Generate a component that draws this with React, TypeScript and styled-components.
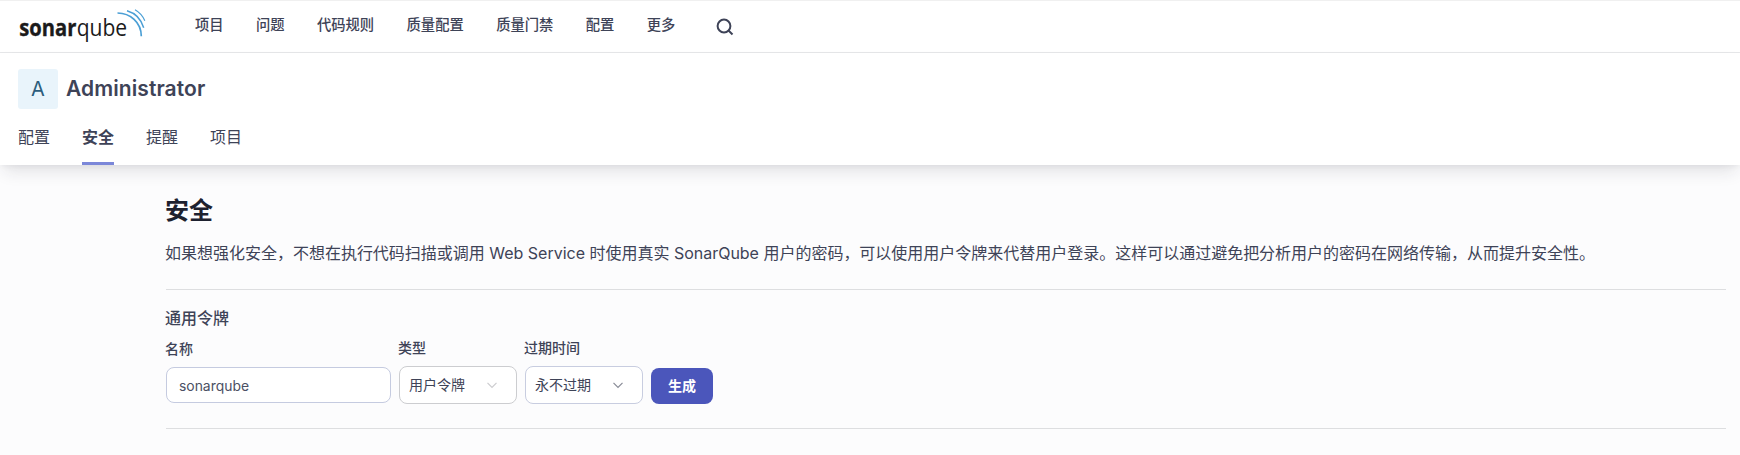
import React from 'react';
import styled, { createGlobalStyle } from 'styled-components';

const GlobalStyle = createGlobalStyle`
  *, *::before, *::after { box-sizing: border-box; }
  body {
    margin: 0;
    background: #fcfcfd;
    color: #3e4357;
    font-family: Inter, "Noto Sans CJK SC", sans-serif;
    font-size: 16px;
    line-height: 24px;
    overflow: hidden;
  }
  h1, h2, p { margin: 0; }
`;

const Page = styled.div`
  height: 455px;
  overflow: hidden;
`;

const TopBar = styled.header`
  display: flex;
  align-items: center;
  height: 53px;
  background: #fff;
  border-top: 1px solid #f0f0f0;
  border-bottom: 1px solid #e6e7e9;
`;

const Logo = styled.svg`
  display: block;
  flex: none;
  width: 150px;
  height: 51px;
`;

const Nav = styled.nav`
  display: flex;
  gap: 32.4px;
  margin-left: 45px;
  padding-bottom: 3px;
`;

const NavLink = styled.a`
  font-size: 14.3px;
  line-height: 20px;
  font-weight: 500;
  white-space: nowrap;
`;

const SearchIcon = styled.svg`
  margin: 1px 0 0 41px;
  width: 18px;
  height: 18px;
`;

const AccountHeader = styled.section`
  position: relative;
  height: 112px;
  padding: 16px 18px 0;
  background: #fff;
  box-shadow: 0 10px 16px -4px rgba(29, 33, 47, 0.12), 0 2px 6px -1px rgba(29, 33, 47, 0.06);
`;

const Identity = styled.div`
  display: flex;
  align-items: center;
  gap: 8px;
  height: 40px;
`;

const Avatar = styled.div`
  width: 40px;
  height: 40px;
  border-radius: 3px;
  background: #e9f4fb;
  color: #2c5d7c;
  font-size: 20px;
  line-height: 40px;
  text-align: center;
`;

const UserName = styled.h2`
  font-size: 21px;
  line-height: 40px;
  font-weight: 600;
  letter-spacing: 0.08px;
`;

const Tabs = styled.nav`
  display: flex;
  gap: 32px;
  height: 56px;
`;

const Tab = styled.a<{ $active?: boolean }>`
  padding-top: 16px;
  font-size: 16px;
  line-height: 24px;
  font-weight: ${({ $active }) => ($active ? 600 : 400)};
  border-bottom: 3px solid ${({ $active }) => ($active ? '#7b87d9' : 'transparent')};
`;

const Main = styled.main`
  padding: 30px 14px 0 165px;
`;

const Title = styled.h1`
  font-size: 24px;
  line-height: 32px;
  font-weight: 700;
  color: #1d212f;
`;

const Description = styled.p`
  margin-top: 14px;
  line-height: 24px;
  font-weight: 400;
  letter-spacing: -0.01px;
  white-space: nowrap;
`;

const Divider = styled.div`
  height: 1px;
  margin: 24px 0 0 1px;
  background: #dddee0;
`;

const SectionTitle = styled.h2`
  margin-top: 16px;
  font-size: 16px;
  line-height: 24px;
  font-weight: 500;
`;

const TokenForm = styled.form`
  display: flex;
  align-items: flex-end;
  gap: 8px;
  height: 74px;
  padding-left: 1px;
`;

const Field = styled.div<{ $width: number; $drop?: number }>`
  display: flex;
  flex-direction: column;
  width: ${({ $width }) => $width}px;
  padding-bottom: ${({ $drop = 0 }) => $drop}px;
`;

const Label = styled.label<{ $gap: number }>`
  margin: 0 0 ${({ $gap }) => $gap}px -1px;
  font-size: 14px;
  line-height: 20px;
  font-weight: 500;
`;

const NameInput = styled.input`
  width: 100%;
  height: 36px;
  padding: 1px 11px 0 12px;
  border: 1px solid #c5cbe0;
  border-radius: 8px;
  background: #fff;
  color: #4b5064;
  font: 400 13.9px/20px Inter, sans-serif;
  outline: none;
`;

const Select = styled.div<{ $muted?: boolean }>`
  display: flex;
  align-items: center;
  justify-content: space-between;
  height: 38px;
  padding: 0 18px 0 9px;
  border: 1px solid ${({ $muted }) => ($muted ? '#cccdd0' : '#c8cde0')};
  border-radius: 8px;
  background: #fff;
  color: #3e4357;
  font-size: 14px;
  line-height: 20px;
  font-weight: 400;

  svg {
    width: 12px;
    height: 12px;
    stroke: ${({ $muted }) => ($muted ? '#cccccf' : '#888b96')};
  }
`;

const GenerateButton = styled.button`
  width: 62px;
  height: 36px;
  padding: 0;
  border: 0;
  border-radius: 8px;
  background: #4b56bb;
  color: #fff;
  font: 700 14px/20px Inter, "Noto Sans CJK SC", sans-serif;
`;

const Chevron = () => (
  <svg viewBox="0 0 12 12" fill="none" strokeWidth="1.2">
    <path d="M1.5 3.8 6 8.3l4.5-4.5" />
  </svg>
);

const links = ['项目', '问题', '代码规则', '质量配置', '质量门禁', '配置', '更多'];
const tabs = ['配置', '安全', '提醒', '项目'];

export default function App() {
  return (
    <>
      <GlobalStyle />
      <Page>
        <TopBar>
          <Logo viewBox="0 1 150 51">
            <g fill="#1b1a1b" fontFamily="Open Sans, Noto Sans, sans-serif" fontSize="23">
              <text transform="translate(19.3 36) scale(0.875 1)" fontWeight="700" stroke="#1b1a1b" strokeWidth="0.4">sonar</text>
              <text transform="translate(76.7 36) scale(0.915 1)" fontWeight="400">qube</text>
            </g>
            <g fill="none" stroke="#4b9fd5">
              <path d="M117.5 13C130 13 141.3 22 141.3 36.3" strokeWidth="1.7" />
              <path d="M127 10.7C135 13 141.3 19.5 143.7 27.8" strokeWidth="1.5" />
              <path d="M135 9.8C139.5 12.3 142.7 16 144.8 20.7" strokeWidth="1.2" />
            </g>
          </Logo>
          <Nav>
            {links.map((label) => (
              <NavLink key={label}>{label}</NavLink>
            ))}
          </Nav>
          <SearchIcon viewBox="0 0 18 18" fill="none" stroke="#3e4357" strokeWidth="2">
            <circle cx="8" cy="8" r="6.4" />
            <path d="m12.5 12.5 4 4" />
          </SearchIcon>
        </TopBar>

        <AccountHeader>
          <Identity>
            <Avatar>A</Avatar>
            <UserName>Administrator</UserName>
          </Identity>
          <Tabs>
            {tabs.map((label) => (
              <Tab key={label} $active={label === '安全'}>{label}</Tab>
            ))}
          </Tabs>
        </AccountHeader>

        <Main>
          <Title>安全</Title>
          <Description>
            如果想强化安全，不想在执行代码扫描或调用 Web Service 时使用真实 SonarQube 用户的密码，可以使用用户令牌来代替用户登录。这样可以通过避免把分析用户的密码在网络传输，从而提升安全性。
          </Description>
          <Divider />
          <SectionTitle>通用令牌</SectionTitle>
          <TokenForm>
            <Field $width={225} $drop={1}>
              <Label $gap={8}>名称</Label>
              <NameInput defaultValue="sonarqube" />
            </Field>
            <Field $width={118}>
              <Label $gap={8}>类型</Label>
              <Select $muted>
                用户令牌
                <Chevron />
              </Select>
            </Field>
            <Field $width={118}>
              <Label $gap={8}>过期时间</Label>
              <Select>
                永不过期
                <Chevron />
              </Select>
            </Field>
            <GenerateButton type="button">生成</GenerateButton>
          </TokenForm>
          <Divider />
        </Main>
      </Page>
    </>
  );
}
